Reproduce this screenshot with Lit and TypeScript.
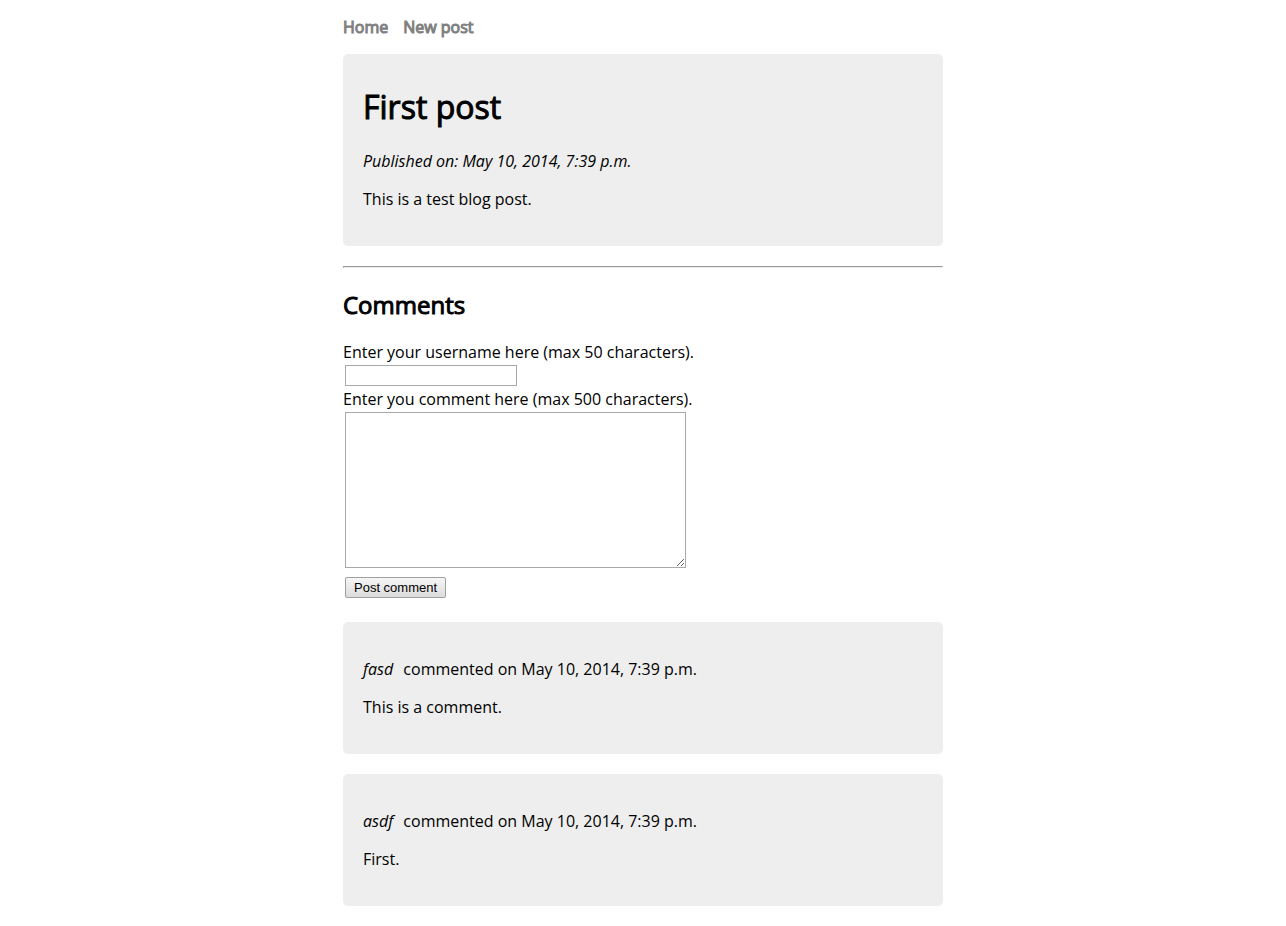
import { LitElement, html, css } from "lit";
import { customElement } from "lit/decorators.js";

interface Comment {
  author: string;
  date: string;
  text: string;
}

const comments: Comment[] = [
  { author: "fasd", date: "May 10, 2014, 7:39 p.m.", text: "This is a comment." },
  { author: "asdf", date: "May 10, 2014, 7:39 p.m.", text: "First." },
];

@customElement("app-root")
export class AppRoot extends LitElement {
  static styles = css`
    :host {
      display: block;
      max-width: 600px;
      margin: 0 auto;
      padding: 16px 0 20px;
      color: #000;
      background: #fff;
      font: 16px/22px "Open Sans", sans-serif;
      font-kerning: none;
    }
    .nav {
      display: flex;
      gap: 15px;
      margin-bottom: 16px;
    }
    .nav-link {
      color: gray;
      font-weight: 400;
      -webkit-text-stroke: 1px gray;
      text-decoration: none;
    }
    .card {
      display: flow-root;
      padding: 20px;
      margin-bottom: 20px;
      border-radius: 5px;
      background: #eee;
    }
    .title,
    .subtitle {
      font-weight: 400;
      -webkit-text-stroke: 1px #000;
    }
    .title {
      margin: 10px 0 20px;
      font-size: 32px;
      line-height: 46px;
    }
    .text {
      margin: 16px 0;
    }
    .author {
      margin-right: 6px;
    }
    .rule {
      margin: 0 0 20px;
      border: 1px inset #eee;
    }
    .subtitle {
      margin: 0 0 20px;
      font-size: 24px;
      line-height: 33px;
    }
    .form {
      display: flex;
      flex-direction: column;
      align-items: flex-start;
      margin-bottom: 24px;
    }
    .field {
      box-sizing: border-box;
      margin: 2px;
      padding: 2px;
      border: 1px solid #a9a9a9;
      border-radius: 0;
      background: #fff;
      font: 13px/15px "Liberation Sans", sans-serif;
      outline: none;
    }
    .name {
      width: 172px;
      height: 21px;
    }
    .message {
      width: 341px;
      height: 156px;
      margin-bottom: 9px;
      resize: both;
    }
    .submit {
      box-sizing: border-box;
      height: 21px;
      margin: 0 2px;
      padding: 0 8px;
      border: 1px solid #a0a0a0;
      border-radius: 2px;
      background: linear-gradient(#f6f6f6, #dcdcdc);
      color: #000;
      font: 13px/15px "Liberation Sans", sans-serif;
    }
  `;

  render() {
    return html`
      <nav class="nav">
        <a class="nav-link" href="#home">Home</a>
        <a class="nav-link" href="#new">New post</a>
      </nav>
      <article class="card">
        <h1 class="title">First post</h1>
        <p class="text"><em>Published on: May 10, 2014, 7:39 p.m.</em></p>
        <p class="text">This is a test blog post.</p>
      </article>
      <hr class="rule" />
      <h2 class="subtitle">Comments</h2>
      <form class="form" @submit=${(e: Event) => e.preventDefault()}>
        <label for="username">Enter your username here (max 50 characters).</label>
        <input class="field name" id="username" type="text" maxlength="50" />
        <label for="comment">Enter you comment here (max 500 characters).</label>
        <textarea class="field message" id="comment" maxlength="500"></textarea>
        <button class="submit" type="submit">Post comment</button>
      </form>
      ${comments.map(
        (c) => html`
          <article class="card">
            <p class="text"><em class="author">${c.author}</em> commented on ${c.date}</p>
            <p class="text">${c.text}</p>
          </article>
        `
      )}
    `;
  }
}
